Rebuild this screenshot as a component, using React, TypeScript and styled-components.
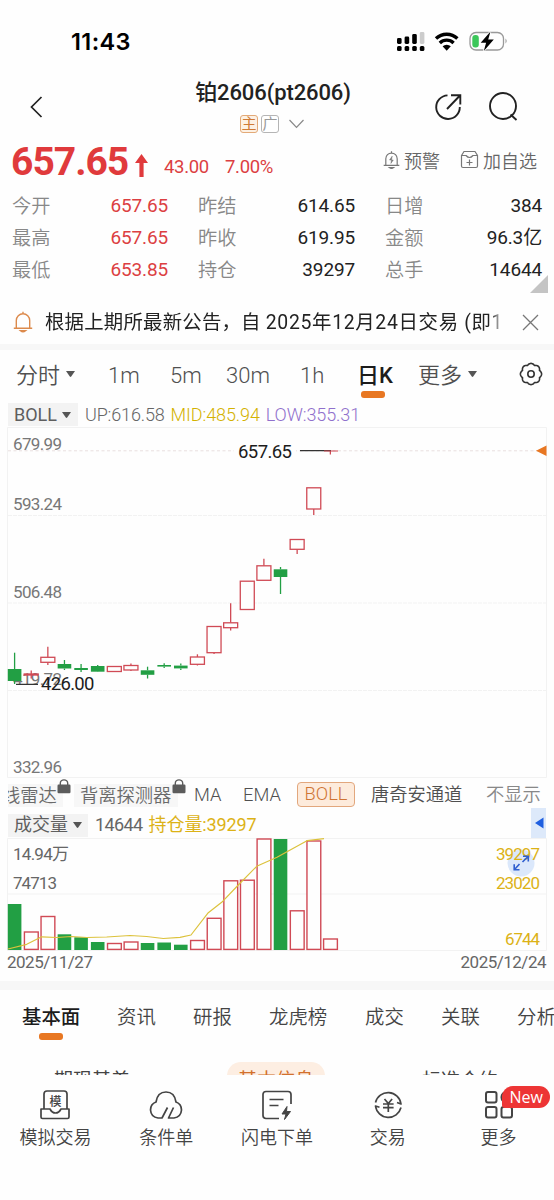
import React from 'react';
import styled, { createGlobalStyle, css } from 'styled-components';

const RED = '#dc3f42';
const GREEN = '#229f44';
const ORANGE = '#e87722';
const GOLD = '#dcb216';

const GlobalStyle = createGlobalStyle`
  * { box-sizing: border-box; }
  body { margin: 0; background: #fefefe; }
`;

const Screen = styled.main`
  width: 554px;
  height: 1200px;
  overflow: hidden;
  display: flex;
  flex-direction: column;
  background: #fefefe;
  color: #222;
  font-family: Roboto, 'Noto Sans CJK SC', sans-serif;
  line-height: 1;
  white-space: nowrap;
`;

interface TextProps {
  $size?: number;
  $weight?: number;
  $color?: string;
  $ls?: number;
}

const Text = styled.span<TextProps>`
  font-size: ${(p) => p.$size ?? 19}px;
  font-weight: ${(p) => p.$weight ?? 400};
  letter-spacing: ${(p) => p.$ls ?? 0}px;
  ${(p) => p.$color && css`color: ${p.$color};`}
`;

/* ---------- status bar and navigation ---------- */

const StatusBar = styled.header`
  height: 66px;
  flex: none;
  display: flex;
  align-items: center;
  justify-content: space-between;
  padding: 17px 45px 0 71px;
`;

const Clock = styled.span`
  font: 600 23.5px/1 Inter, sans-serif;
  letter-spacing: 0.4px;
  color: #000;
`;

const NavBar = styled.nav`
  height: 74px;
  flex: none;
  display: grid;
  grid-template-columns: 110px 1fr 110px;
  padding: 0 35px 0 29px;
`;

const NavSide = styled.div<{ $end?: boolean }>`
  display: flex;
  align-items: center;
  height: 81px;
  gap: 25px;
  justify-content: ${(p) => (p.$end ? 'flex-end' : 'flex-start')};
`;

const TitleBlock = styled.div`
  display: flex;
  flex-direction: column;
  align-items: center;
  padding: 15px 0 0;
`;

const Title = styled.h1`
  margin: 0 2px 0 0;
  font-size: 22px;
  line-height: 24px;
  font-weight: 500;
  letter-spacing: -0.1px;
`;

const Badges = styled.div`
  display: flex;
  align-items: center;
  gap: 3px;
  margin: 10px 3px 0 0;
`;

const Badge = styled.span<{ $accent?: boolean }>`
  width: 18px;
  height: 18px;
  border-radius: 3px;
  border: 1px solid ${(p) => (p.$accent ? '#e3aa78' : '#b5b5b5')};
  background: ${(p) => (p.$accent ? '#fdf1e4' : '#fff')};
  color: ${(p) => (p.$accent ? '#cf7a35' : '#999')};
  font-size: 15px;
  line-height: 16px;
  display: flex;
  justify-content: center;
`;

const BadgeArrow = styled.svg`
  margin-left: 6px;
`;

/* ---------- quote ---------- */

const PriceRow = styled.section`
  height: 49px;
  flex: none;
  display: flex;
  align-items: center;
  padding: 0 17px 0 11px;
`;

const Price = styled.strong`
  width: 124px;
  flex: none;
  font-size: 39px;
  font-weight: 700;
  letter-spacing: -1px;
  color: #e03a3c;
  margin-top: -5px;
`;

const Change = styled.span<{ $w: number }>`
  width: ${(p) => p.$w}px;
  padding-top: 6px;
  font-size: 18.5px;
  letter-spacing: -0.3px;
  color: ${RED};
`;

const PriceArrow = styled.svg`
  margin: 1px 16px 0 0;
`;

const Actions = styled.div`
  display: flex;
  margin-left: auto;
  gap: 20px;
  margin-top: -10px;
`;

const Action = styled.button`
  display: flex;
  align-items: center;
  gap: 4px;
  border: 0;
  padding: 0;
  background: none;
  font: 350 18px/1 'Noto Sans CJK SC', sans-serif;
  color: #666;
`;

const Stats = styled.section`
  height: 105px;
  flex: none;
  display: grid;
  grid-template-columns: 156px 157px 157px;
  grid-auto-rows: 32px;
  column-gap: 30px;
  padding: 1px 12px 0;
  position: relative;
`;

const Stat = styled.div`
  display: flex;
  align-items: center;
  justify-content: space-between;
`;

const StatLabel = styled.span`
  padding-top: 2px;
  font-size: 19.2px;
  font-weight: 350;
  color: #888;
`;

const StatValue = styled.span<{ $up?: boolean }>`
  margin-top: -1px;
  font-size: 19px;
  letter-spacing: -0.15px;
  color: ${(p) => (p.$up ? RED : '#222')};
`;

const Corner = styled.svg`
  position: absolute;
  right: 6px;
  bottom: 1px;
`;

const Notice = styled.section`
  height: 50px;
  flex: none;
  display: flex;
  align-items: center;
  padding: 6px 15px 0 13px;
`;

const NoticeText = styled.p`
  margin: 1px 17px 0 12px;
  width: 460px;
  overflow: hidden;
  line-height: 28px;
  font-size: 19.4px;
  letter-spacing: 0.22px;
  mask-image: linear-gradient(to right, #000 446px, transparent 459px);
`;

const Band = styled.div<{ $h: number }>`
  height: ${(p) => p.$h}px;
  flex: none;
  background: #f7f7f7;
`;

/* ---------- period tabs and indicator line ---------- */

const Periods = styled.nav`
  height: 52px;
  flex: none;
  display: grid;
  grid-template-columns: 92px 62px 56px 74px 57px 61px 101px 24px;
  padding-left: 16px;
`;

const Period = styled.div<{ $active?: boolean }>`
  height: 50px;
  display: flex;
  align-items: center;
  gap: 5px;
  position: relative;
  padding-top: 2px;
  font-size: 22px;
  font-weight: ${(p) => (p.$active ? 500 : 350)};
  color: ${(p) => (p.$active ? '#1c1c1c' : '#505050')};

  svg { margin-top: -4px; }
`;

const Marker = styled.i<{ $left: number; $top: number }>`
  position: absolute;
  left: ${(p) => p.$left}px;
  top: ${(p) => p.$top}px;
  width: 24px;
  height: 7px;
  border-radius: 3px;
  background: ${ORANGE};
`;

const IndicatorLine = styled.div<{ $h: number }>`
  height: ${(p) => p.$h}px;
  flex: none;
  display: flex;
  align-items: center;
  padding: 0 8px;
  gap: 6px;
`;

const Chip = styled.span<{ $w: number }>`
  width: ${(p) => p.$w}px;
  height: 23px;
  flex: none;
  display: flex;
  align-items: center;
  gap: 4px;
  padding-left: 6px;
  margin-right: 1px;
  background: #f3f3f3;
  color: #5e5e5e;
  font-size: 18px;
`;

const Pager = styled.span`
  margin: -4px 0 0 auto;
  width: 15px;
  height: 30px;
  background: #dde9fa;
  display: flex;
  align-items: center;
  justify-content: center;
`;

const ChartSvg = styled.svg`
  display: block;
  flex: none;
  margin-left: 7px;
  font-family: Roboto, 'Noto Sans CJK SC', sans-serif;
`;

const IndicatorTabs = styled.nav`
  height: 33px;
  flex: none;
  margin-left: 8px;
  display: grid;
  grid-template-columns: 66px 120px 49px 54px 74px 115px 60px;
  align-items: center;
  overflow: hidden;
`;

const IndicatorTab = styled.span<{ $muted?: boolean; $boxed?: boolean }>`
  height: 23px;
  display: flex;
  align-items: center;
  font-size: 18.3px;
  font-weight: 350;
  color: ${(p) => (p.$muted ? '#888' : '#505050')};
  ${(p) =>
    p.$boxed &&
    css`
      width: 58px;
      height: 25px;
      margin-top: -3px;
      justify-content: center;
      border: 1px solid #e2a77d;
      border-radius: 4px;
      background: #fdebdc;
      color: #cf7433;
    `}
`;

const LockedTab = styled(IndicatorTab)<{ $w: number }>`
  width: ${(p) => p.$w}px;
  position: relative;
  background: #f7f7f7;
  color: #6a6a6a;
`;

const Clip = styled.span<{ $shift: number }>`
  height: 23px;
  line-height: 23px;
  overflow: hidden;
  text-indent: ${(p) => p.$shift}px;
`;

const Lock = styled.svg`
  position: absolute;
  top: -5px;
  right: -8px;
`;

const Dates = styled.div`
  height: 30px;
  flex: none;
  display: flex;
  justify-content: space-between;
  padding: 3px 8px 0 7px;
`;

/* ---------- info tabs, sub tabs, bottom bar ---------- */

const InfoTabs = styled.nav`
  height: 72px;
  flex: none;
  display: grid;
  grid-template-columns: 95px 76px 76px 96px 76px 76px 60px;
  padding-left: 22px;
`;

const InfoTab = styled.span<{ $active?: boolean }>`
  height: 53px;
  padding-top: 2px;
  display: flex;
  align-items: center;
  position: relative;
  font-size: 19.4px;
  font-weight: ${(p) => (p.$active ? 500 : 350)};
  color: ${(p) => (p.$active ? '#1c1c1c' : '#444')};
`;

const SubTabs = styled.div`
  height: 13px;
  flex: none;
  overflow: hidden;
  display: grid;
  grid-template-columns: 98px 98px 98px;
  column-gap: 86px;
  padding-left: 43px;
`;

const SubTab = styled.span<{ $active?: boolean }>`
  height: 32px;
  line-height: 38px;
  border-radius: 14px;
  text-align: center;
  font-size: 19px;
  background: ${(p) => (p.$active ? '#fdeee2' : 'transparent')};
  color: ${(p) => (p.$active ? '#d2702c' : '#444')};
`;

const BottomBar = styled.footer`
  flex: 1;
  display: grid;
  grid-template-columns: repeat(5, 110.8px);
  background: #fefefe;
`;

const BottomItem = styled.div`
  display: flex;
  flex-direction: column;
  align-items: center;
  padding-top: 12px;
  gap: 8px;
  position: relative;
  font-size: 18px;
  font-weight: 350;
  color: #444;
`;

const NewBadge = styled.span`
  position: absolute;
  left: 59px;
  top: 11px;
  width: 48px;
  height: 22px;
  border-radius: 11px 11px 11px 3px;
  background: #ed3535;
  color: #fff;
  font: 400 16px/22px 'Open Sans', sans-serif;
  text-align: center;
`;

/* ---------- data ---------- */

const stats = [
  { label: '今开', value: '657.65', up: true },
  { label: '昨结', value: '614.65' },
  { label: '日增', value: '384' },
  { label: '最高', value: '657.65', up: true },
  { label: '昨收', value: '619.95' },
  { label: '金额', value: '96.3亿' },
  { label: '最低', value: '653.85', up: true },
  { label: '持仓', value: '39297' },
  { label: '总手', value: '14644' },
];

type Candle = { up: boolean; top: number; bottom: number; high: number; low: number; vol: number };
const c = (up: boolean, top: number, bottom: number, high: number, low: number, vol: number): Candle => ({
  up, top, bottom, high, low, vol,
});

const candles: Candle[] = [
  c(false, 669, 681, 652.7, 684, 904),
  c(true, 674, 675, 670.5, 678.5, 931.5),
  c(true, 657.3, 662.3, 646.7, 665, 916),
  c(false, 664, 668.5, 660, 670, 934.3),
  c(false, 668, 670, 664, 672, 937.3),
  c(false, 666, 671.7, 665, 672, 942),
  c(true, 666.5, 671.5, 666.5, 671.5, 943),
  c(true, 665.5, 670, 663.5, 671, 941.5),
  c(false, 670.3, 674.8, 666.7, 678.5, 943),
  c(false, 665, 666.6, 663.3, 668, 942.5),
  c(false, 665.6, 668.4, 663.5, 670, 944.7),
  c(true, 657, 664.3, 654.3, 665.5, 940),
  c(true, 626.5, 652.7, 626.5, 654, 917.8),
  c(true, 622.8, 627.7, 603.3, 630.5, 880.3),
  c(true, 581.2, 609.5, 581.2, 609.5, 879.7),
  c(true, 565.8, 580.3, 558.7, 580.3, 838.5),
  c(false, 569.3, 577, 567, 594, 839),
  c(true, 539.5, 549.3, 539.5, 554, 910.3),
  c(true, 487.8, 509, 487.8, 515, 840.5),
  c(true, 451, 451, 451, 454.5, 938.5),
];

const centerX = (i: number) => 14.6 + i * 16.62;

const openInterest =
  '8,949 26.7,944.3 41.7,936.8 56.7,937.5 71.7,936.5 86.7,937.5 106.7,937 130,935.5 146.7,936.5 163.3,938.5 180,937.3 191,935 208.3,912.7 221.7,902.3 238.3,885 256.7,866.3 277,857.3 307,840.7 324,838.7';

/* ---------- icons and charts ---------- */

const Caret = () => (
  <svg width="11" height="8" viewBox="0 0 11 8">
    <path d="M1 1h9L6.2 6.5q-.7.8-1.4 0z" fill="#555" />
  </svg>
);

const StatusIcons = () => (
  <svg width="113" height="24" viewBox="396 30 113 24">
    {[0, 1, 2, 3].map((i) => (
      <rect key={i} x={397 + i * 7.6} y="46" width="4.6" height="5" rx="1.5" />
    ))}
    <rect x="397" y="38" width="4.6" height="6" rx="1.4" />
    <rect x="404.6" y="36.5" width="4.6" height="7.5" rx="1.4" />
    <rect x="412.2" y="34" width="4.6" height="10" rx="1.4" />
    <rect x="419.8" y="32" width="4.6" height="12" rx="1.4" fill="#ccc" />
    <g fill="none" stroke="#000" strokeWidth="3.4">
      <path d="M436 38.5a15.5 15.5 0 0 1 21.4 0" />
      <path d="M439.8 42.9a10 10 0 0 1 13.8 0" />
    </g>
    <path d="M442.6 46.3a6 6 0 0 1 8.2 0l-4.1 4.4z" />
    <rect x="470" y="32.5" width="33.5" height="17.5" rx="6" fill="none" stroke="#999" strokeWidth="1.3" />
    <path d="M505.5 38.5q2.4 2.5 0 5z" fill="#999" />
    <rect x="472.3" y="35" width="6.5" height="12.5" rx="3" fill="#3cc75a" />
    <path d="M490.5 31.5l-9.8 11.2h5.4l-2.3 8.3 10-11.4h-5.6z" stroke="#fff" strokeWidth="1.6" paintOrder="stroke" />
  </svg>
);

const Bell = ({ color, w, h, bolt }: { color: string; w: number; h: number; bolt?: boolean }) => (
  <svg width={w} height={h} viewBox="0 0 20 22" fill="none" stroke={color} strokeWidth="1.4">
    <path d="M10 .8v2M3.3 17V9.5a6.7 6.7 0 0 1 13.4 0V17M.8 17.3h18.4" />
    <path d="M7.5 19.8q2.5 2 5 0z" fill={color} />
    {bolt && <path d="M10.8 6.5L7.7 11h4.4L9.3 15z" fill={color} strokeWidth=".6" />}
  </svg>
);

const Gear = () => {
  const pts: string[] = [];
  for (let a = 0; a <= 360; a += 3.75) {
    const t = (a * Math.PI) / 180;
    const r = 9.2 + 1.4 * Math.abs(Math.cos(4 * t));
    pts.push(`${(12 + r * Math.cos(t)).toFixed(2)},${(12 + r * Math.sin(t)).toFixed(2)}`);
  }
  return (
    <svg width="24" height="24" viewBox="0 0 24 24" fill="none" stroke="#333" strokeWidth="1.6">
      <polygon points={pts.join(' ')} strokeLinejoin="round" />
      <circle cx="12" cy="12" r="3.2" />
    </svg>
  );
};

const LockIcon = () => (
  <Lock width="14" height="15" viewBox="0 0 14 15">
    <rect x="0.5" y="5.5" width="13" height="8.8" rx="1.2" fill="#5c5c5c" />
    <path d="M3.3 6V4.2a3.7 3.3 0 0 1 7.4 0V6" fill="none" stroke="#5c5c5c" strokeWidth="1.4" />
  </Lock>
);

const KLineChart = () => (
  <ChartSvg width="541" height="352" viewBox="7 427 541 352">
    <g stroke="#f2f2f2" fill="none">
      <path d="M7.5 427.5H546.5V777.5H7.5z" />
      <path d="M8 515.5H546M8 603H546M8 690.5H546" strokeDasharray="4 1" />
    </g>
    <path d="M8 450.8H546" stroke="#e8dfdf" strokeDasharray="3 2.5" />
    <g fontSize="17" fill="#777">
      <text x="13" y="450" textLength="49">679.99</text>
      <text x="13" y="510" textLength="49">593.24</text>
      <text x="13" y="598" textLength="49">506.48</text>
      <text x="13" y="685" textLength="49">419.72</text>
      <text x="13" y="773" textLength="49">332.96</text>
    </g>
    {candles.map((k, i) => {
      const x = centerX(i);
      const color = k.up ? '#d04a55' : GREEN;
      return (
        <g key={i} stroke={color} strokeWidth="1.3">
          {k.high < k.top && <path d={`M${x} ${k.high}V${k.top}`} />}
          {k.low > k.bottom && <path d={`M${x} ${k.bottom}V${k.low}`} />}
          {k.up ? (
            <rect x={x - 7} y={k.top} width="14" height={k.bottom - k.top} fill="#fefefe" />
          ) : (
            <rect x={x - 6.8} y={k.top} width="13.6" height={k.bottom - k.top} fill={color} stroke="none" />
          )}
        </g>
      );
    })}
    <rect x="234" y="441" width="62" height="20" fill="#fefefe" />
    <path d="M300 450.7H331M16 684.3H38" stroke="#333" strokeWidth="1.3" />
    <path d="M324 451H338" stroke="#d04a55" strokeWidth="1" />
    <g fontSize="18.5" fill="#1c1c1c">
      <text x="238" y="457.5" textLength="54">657.65</text>
      <text x="41" y="690" textLength="53.5">426.00</text>
    </g>
    <path d="M546.5 445.5V456L536 450.8z" fill={ORANGE} />
  </ChartSvg>
);

const VolumeChart = () => (
  <ChartSvg width="541" height="113" viewBox="7 838 541 113">
    <path d="M7.5 838.5H546.5V950.5H7.5zM8 894H546" stroke="#f2f2f2" fill="none" />
    {candles.map((k, i) => {
      const x = centerX(i);
      return k.up ? (
        <rect key={i} x={x - 6.8} y={k.vol + 0.5} width="13.8" height={948.9 - k.vol} fill="#fefefe" stroke="#d04a55" strokeWidth="1.4" />
      ) : (
        <rect key={i} x={x - 6.8} y={k.vol} width="13.6" height={950 - k.vol} fill={GREEN} />
      );
    })}
    <polyline points={openInterest} fill="none" stroke="#dcc23c" strokeWidth="1.2" strokeLinejoin="round" />
    <g fontSize="17" fill="#666">
      <text x="13" y="860" textLength="56">14.94万</text>
      <text x="13" y="888.5" textLength="44">74713</text>
    </g>
    <circle cx="521" cy="863" r="13.5" fill="#dbe8fb" />
    <g fontSize="17" fill={GOLD}>
      <text x="496" y="860" textLength="44">39297</text>
      <text x="496" y="888.5" textLength="44">23020</text>
      <text x="505" y="945" textLength="35">6744</text>
    </g>
    <path d="M522.5 862l5.5-5.5M523 856.3h5.3v5.3M519.5 864l-5 5.5M514.2 864.2v5.5h5.3" fill="none" stroke="#2f5fd0" strokeWidth="1.6" />
  </ChartSvg>
);

const IconBox = ({ children }: { children: React.ReactNode }) => (
  <svg width="34" height="34" viewBox="0 0 34 34" fill="none" stroke="#444" strokeWidth="1.7" strokeLinejoin="round">
    {children}
  </svg>
);

export default function App() {
  return (
    <Screen>
      <GlobalStyle />
      <StatusBar>
        <Clock>11:43</Clock>
        <StatusIcons />
      </StatusBar>

      <NavBar>
        <NavSide>
          <svg width="14" height="22" viewBox="0 0 14 22" fill="none" stroke="#222" strokeWidth="1.7">
            <path d="M12.5 1L2.5 11l10 10" />
          </svg>
        </NavSide>
        <TitleBlock>
          <Title>铂2606(pt2606)</Title>
          <Badges>
            <Badge $accent>主</Badge>
            <Badge>广</Badge>
            <BadgeArrow width="17" height="10" viewBox="0 0 17 10" fill="none" stroke="#888" strokeWidth="1.2">
              <path d="M1.5 1l7 7.3 7-7.3" />
            </BadgeArrow>
          </Badges>
        </TitleBlock>
        <NavSide $end>
          <svg width="29" height="30" viewBox="0 0 29 30" fill="none" stroke="#222" strokeWidth="1.9">
            <path d="M13.500 3.400A11.800 11.800 0 1 0 25.800 15M13 17L25.500 4M17 3.200h9.300v9.300" />
          </svg>
          <svg width="31" height="31" viewBox="0 0 31 31" fill="none" stroke="#222" strokeWidth="1.9">
            <circle cx="15" cy="15" r="13" />
            <path d="M22.5 23.5l6 5.5" />
          </svg>
        </NavSide>
      </NavBar>

      <PriceRow>
        <Price>657.65</Price>
        <PriceArrow width="13" height="23" viewBox="0 0 13 23">
          <path d="M6.5 0L13 9H8.6v14H4.4V9H0z" fill="#e03a3c" />
        </PriceArrow>
        <Change $w={61}>43.00</Change>
        <Change $w={54}>7.00%</Change>
        <Actions>
          <Action>
            <Bell color="#777" w={17} h={20} bolt />
            预警
          </Action>
          <Action>
            <svg width="19" height="19" viewBox="0 0 19 19" fill="none" stroke="#777" strokeWidth="1.2">
              <path d="M1.5 5.5L4 1.5h11l2.5 4V16q0 1.5-1.5 1.5H3Q1.5 17.5 1.5 16zM1.5 5.5h4.5q3.5 4 7 0h4.5M9.5 9.5v6M6.5 12.5h6" />
            </svg>
            加自选
          </Action>
        </Actions>
      </PriceRow>

      <Stats>
        {stats.map((s) => (
          <Stat key={s.label}>
            <StatLabel>{s.label}</StatLabel>
            <StatValue $up={s.up}>{s.value}</StatValue>
          </Stat>
        ))}
        <Corner width="18" height="18" viewBox="0 0 18 18">
          <path d="M18 0v18H0z" fill="#c4c4c4" />
        </Corner>
      </Stats>

      <Notice>
        <Bell color="#dc8a4c" w={20} h={22} />
        <NoticeText>
          根据上期所最新公告，自 <Text $size={19.4} $ls={0.68}>2025年12月24日交易 (即1</Text>
        </NoticeText>
        <svg width="17" height="17" viewBox="0 0 17 17" stroke="#777" strokeWidth="1.3">
          <path d="M1 1l15 15M16 1L1 16" />
        </svg>
      </Notice>
      <Band $h={6} />

      <Periods>
        <Period>分时<Caret /></Period>
        <Period>1m</Period>
        <Period>5m</Period>
        <Period>30m</Period>
        <Period>1h</Period>
        <Period $active>
          日K
          <Marker $left={4} $top={41} />
        </Period>
        <Period>更多<Caret /></Period>
        <Period><Gear /></Period>
      </Periods>

      <IndicatorLine $h={25}>
        <Chip $w={70}>BOLL<Caret /></Chip>
        <Text $size={18} $weight={300} $color="#666" $ls={-0.15}>UP:616.58</Text>
        <Text $size={18} $weight={350} $color="#d4b200" $ls={-0.1}>MID:485.94</Text>
        <Text $size={18} $weight={300} $color="#9070cc" $ls={-0.1}>LOW:355.31</Text>
      </IndicatorLine>

      <KLineChart />

      <IndicatorTabs>
        <LockedTab $w={55}>
          <Clip $shift={-6}>线雷达</Clip>
          <LockIcon />
        </LockedTab>
        <LockedTab $w={104}>
          <Clip $shift={6}>背离探测器</Clip>
          <LockIcon />
        </LockedTab>
        <IndicatorTab>MA</IndicatorTab>
        <IndicatorTab>EMA</IndicatorTab>
        <IndicatorTab $boxed>BOLL</IndicatorTab>
        <IndicatorTab>唐奇安通道</IndicatorTab>
        <IndicatorTab $muted>不显示</IndicatorTab>
      </IndicatorTabs>

      <IndicatorLine $h={26}>
        <Chip $w={80}>成交量<Caret /></Chip>
        <Text $size={18} $color="#666" $ls={-0.6}>14644</Text>
        <Text $size={18} $color={GOLD} $ls={-0.1}>持仓量:39297</Text>
        <Pager>
          <svg width="10" height="12" viewBox="0 0 10 12">
            <path d="M9.5 .5v11L1 6z" fill="#1f5fe0" />
          </svg>
        </Pager>
      </IndicatorLine>

      <VolumeChart />

      <Dates>
        <Text $size={17} $color="#666" $ls={-0.5}>2025/11/27</Text>
        <Text $size={17} $color="#666" $ls={-0.5}>2025/12/24</Text>
      </Dates>
      <Band $h={9} />

      <InfoTabs>
        <InfoTab $active>
          基本面
          <Marker $left={17} $top={43} />
        </InfoTab>
        <InfoTab>资讯</InfoTab>
        <InfoTab>研报</InfoTab>
        <InfoTab>龙虎榜</InfoTab>
        <InfoTab>成交</InfoTab>
        <InfoTab>关联</InfoTab>
        <InfoTab>分析</InfoTab>
      </InfoTabs>

      <SubTabs>
        <SubTab>期现基差</SubTab>
        <SubTab $active>基本信息</SubTab>
        <SubTab>标准合约</SubTab>
      </SubTabs>

      <BottomBar>
        <BottomItem>
          <IconBox>
            <path d="M6 22V7q0-3 3-3h17q3 0 3 3v15M3 22h9q2 4 5.5 4T23 22h8v8q0 1.5-1.5 1.5h-25Q3 31.5 3 30z" />
            <text x="17.5" y="18.5" fontSize="12" fontWeight="500" textAnchor="middle" fill="#444" stroke="none">模</text>
          </IconBox>
          模拟交易
        </BottomItem>
        <BottomItem>
          <IconBox>
            <path d="M13.5 31H9Q2 30 1.5 23q0-6 5.5-8Q8.5 5 17 5t10 10q5.5 2 5.5 8Q32 30 25 31h-5.5l5-10.5M13 31l5.5-10.5" />
          </IconBox>
          条件单
        </BottomItem>
        <BottomItem>
          <IconBox>
            <path d="M19 31.5H6q-3 0-3-3v-21q0-3 3-3h22q3 0 3 3V17M9.5 12.5h14M9.5 18.5h9" />
            <path d="M27 19.5l-5 7.5h4l-1.5 5.5 6-8h-4z" fill="#444" strokeWidth="1" />
          </IconBox>
          闪电下单
        </BottomItem>
        <BottomItem>
          <IconBox>
            <path d="M4.500 15.500a13 13 0 0 1 25.500 1.500l-4-1.500M30 20.500A13 13 0 0 1 4.500 19l4 1.200" />
            <path d="M13.500 12l3.800 4.500 3.800-4.500M12 17h10.600M12 20.700h10.600M17.300 16.500v8.500" />
          </IconBox>
          交易
        </BottomItem>
        <BottomItem>
          <IconBox>
            <g strokeWidth="2">
              <rect x="4" y="5" width="10.5" height="10.5" rx="2" />
              <rect x="19.5" y="5" width="10.5" height="10.5" rx="5" />
              <rect x="4" y="20" width="10.5" height="10.5" rx="2" />
              <rect x="19.5" y="20" width="10.5" height="10.5" rx="2" />
            </g>
          </IconBox>
          更多
          <NewBadge>New</NewBadge>
        </BottomItem>
      </BottomBar>
    </Screen>
  );
}
